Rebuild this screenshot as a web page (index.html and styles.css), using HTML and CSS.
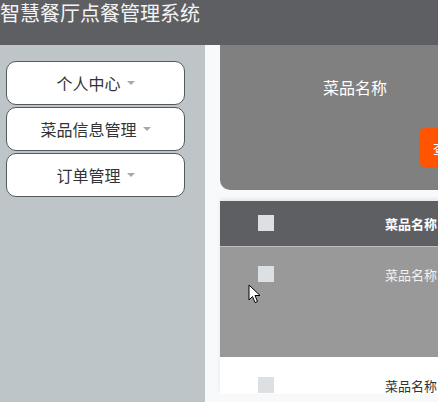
FILE: index.html
```html
<!DOCTYPE html>
<html lang="zh-CN">
<head>
    <meta charset="UTF-8" />
    <meta name="viewport" content="width=device-width, initial-scale=1.0"/>
    <title>智慧餐厅点餐管理系统</title>
    <link rel="stylesheet" href="styles.css">
</head>
<body>
<div class="header">
    <h1>智慧餐厅点餐管理系统</h1>
</div>

<div class="layout">
    <div class="sidebar">
        <button class="menu-btn">个人中心<span class="caret"></span></button>
        <button class="menu-btn">菜品信息管理<span class="caret"></span></button>
        <button class="menu-btn">订单管理<span class="caret"></span></button>
    </div>

    <div class="main">
        <div class="search-card">
            <label class="search-label">菜品名称</label>
            <button class="search-btn">查询</button>
        </div>

        <table class="data-table">
            <thead>
                <tr>
                    <th class="col-check"><span class="checkbox"></span></th>
                    <th class="col-name">菜品名称</th>
                </tr>
            </thead>
            <tbody>
                <tr class="row-hover">
                    <td class="col-check"><span class="checkbox"></span></td>
                    <td class="col-name">菜品名称</td>
                </tr>
                <tr>
                    <td class="col-check"><span class="checkbox"></span></td>
                    <td class="col-name">菜品名称</td>
                </tr>
            </tbody>
        </table>
    </div>
</div>

<svg class="cursor" width="13" height="20" viewBox="0 0 13 20">
    <path d="M1 1 L1 16 L4.5 12.5 L7 18.5 L9.5 17.5 L7 11.5 L12 11.5 Z" fill="#fff" stroke="#000" stroke-width="1" stroke-linejoin="round"/>
</svg>
</body>
</html>
```

FILE: styles.css
```css
* {
    box-sizing: border-box;
    margin: 0;
    padding: 0;
    font-family: "Noto Sans CJK SC", "Noto Sans", sans-serif;
}

body {
    width: 438px;
    height: 402px;
    overflow: hidden;
    background-color: #f7f9fa;
    position: relative;
}

.header {
    height: 45px;
    background-color: #5e5f63;
}

.header h1 {
    font-size: 20px;
    font-weight: normal;
    line-height: 26px;
    color: #f4f4f4;
    white-space: nowrap;
}

.layout {
    display: flex;
    height: 357px;
}

.sidebar {
    width: 205px;
    flex-shrink: 0;
    background-color: #bec5c9;
    padding: 16px 0 0 6px;
    display: flex;
    flex-direction: column;
    gap: 2px;
}

.menu-btn {
    width: 179px;
    height: 44px;
    background-color: #fff;
    border: 1px solid #55585c;
    border-radius: 10px;
    font-size: 16px;
    color: #333;
    display: flex;
    align-items: center;
    justify-content: center;
    gap: 6px;
}

.caret {
    width: 0;
    height: 0;
    border-left: 4px solid transparent;
    border-right: 4px solid transparent;
    border-top: 4px solid #a8a8a8;
}

.main {
    margin-left: 15px;
    width: 600px;
    flex-shrink: 0;
}

.search-card {
    height: 145px;
    background-color: #808080;
    border-radius: 0 0 10px 10px;
    padding: 28px 0 0 103px;
    display: flex;
    flex-direction: column;
    align-items: flex-start;
}

.search-label {
    font-size: 16px;
    line-height: 28px;
    color: #fff;
}

.search-btn {
    margin: 26px 0 0 96px;
    height: 41px;
    padding: 0 14px;
    background-color: #ff5500;
    color: #fff;
    border: none;
    border-radius: 8px;
    font-size: 14px;
}

.data-table {
    margin-top: 11px;
    width: 100%;
    border-collapse: collapse;
    box-shadow: 0 -2px 4px rgba(0, 0, 0, 0.08);
    font-size: 13px;
}

.data-table th,
.data-table td {
    text-align: left;
}

.data-table thead tr {
    height: 45px;
    background-color: #5e5f63;
    color: #fff;
}

.data-table th {
    vertical-align: middle;
    font-weight: bold;
}

.data-table td {
    vertical-align: top;
    padding-top: 19px;
    color: #333;
    line-height: 17px;
}

.row-hover {
    height: 111px;
    background-color: #999;
    border-top: 1px solid #bdbdbd;
}

.row-hover td {
    color: #f2f2f2;
}

.data-table tbody tr:last-child {
    background-color: #fff;
}

.data-table tbody tr:last-child td {
    padding-top: 20px;
}

.col-check {
    width: 165px;
    padding-left: 38px;
}

.checkbox {
    display: block;
    width: 16px;
    height: 16px;
    background-color: #dde0e3;
}

.cursor {
    position: absolute;
    left: 248px;
    top: 284px;
}
```
